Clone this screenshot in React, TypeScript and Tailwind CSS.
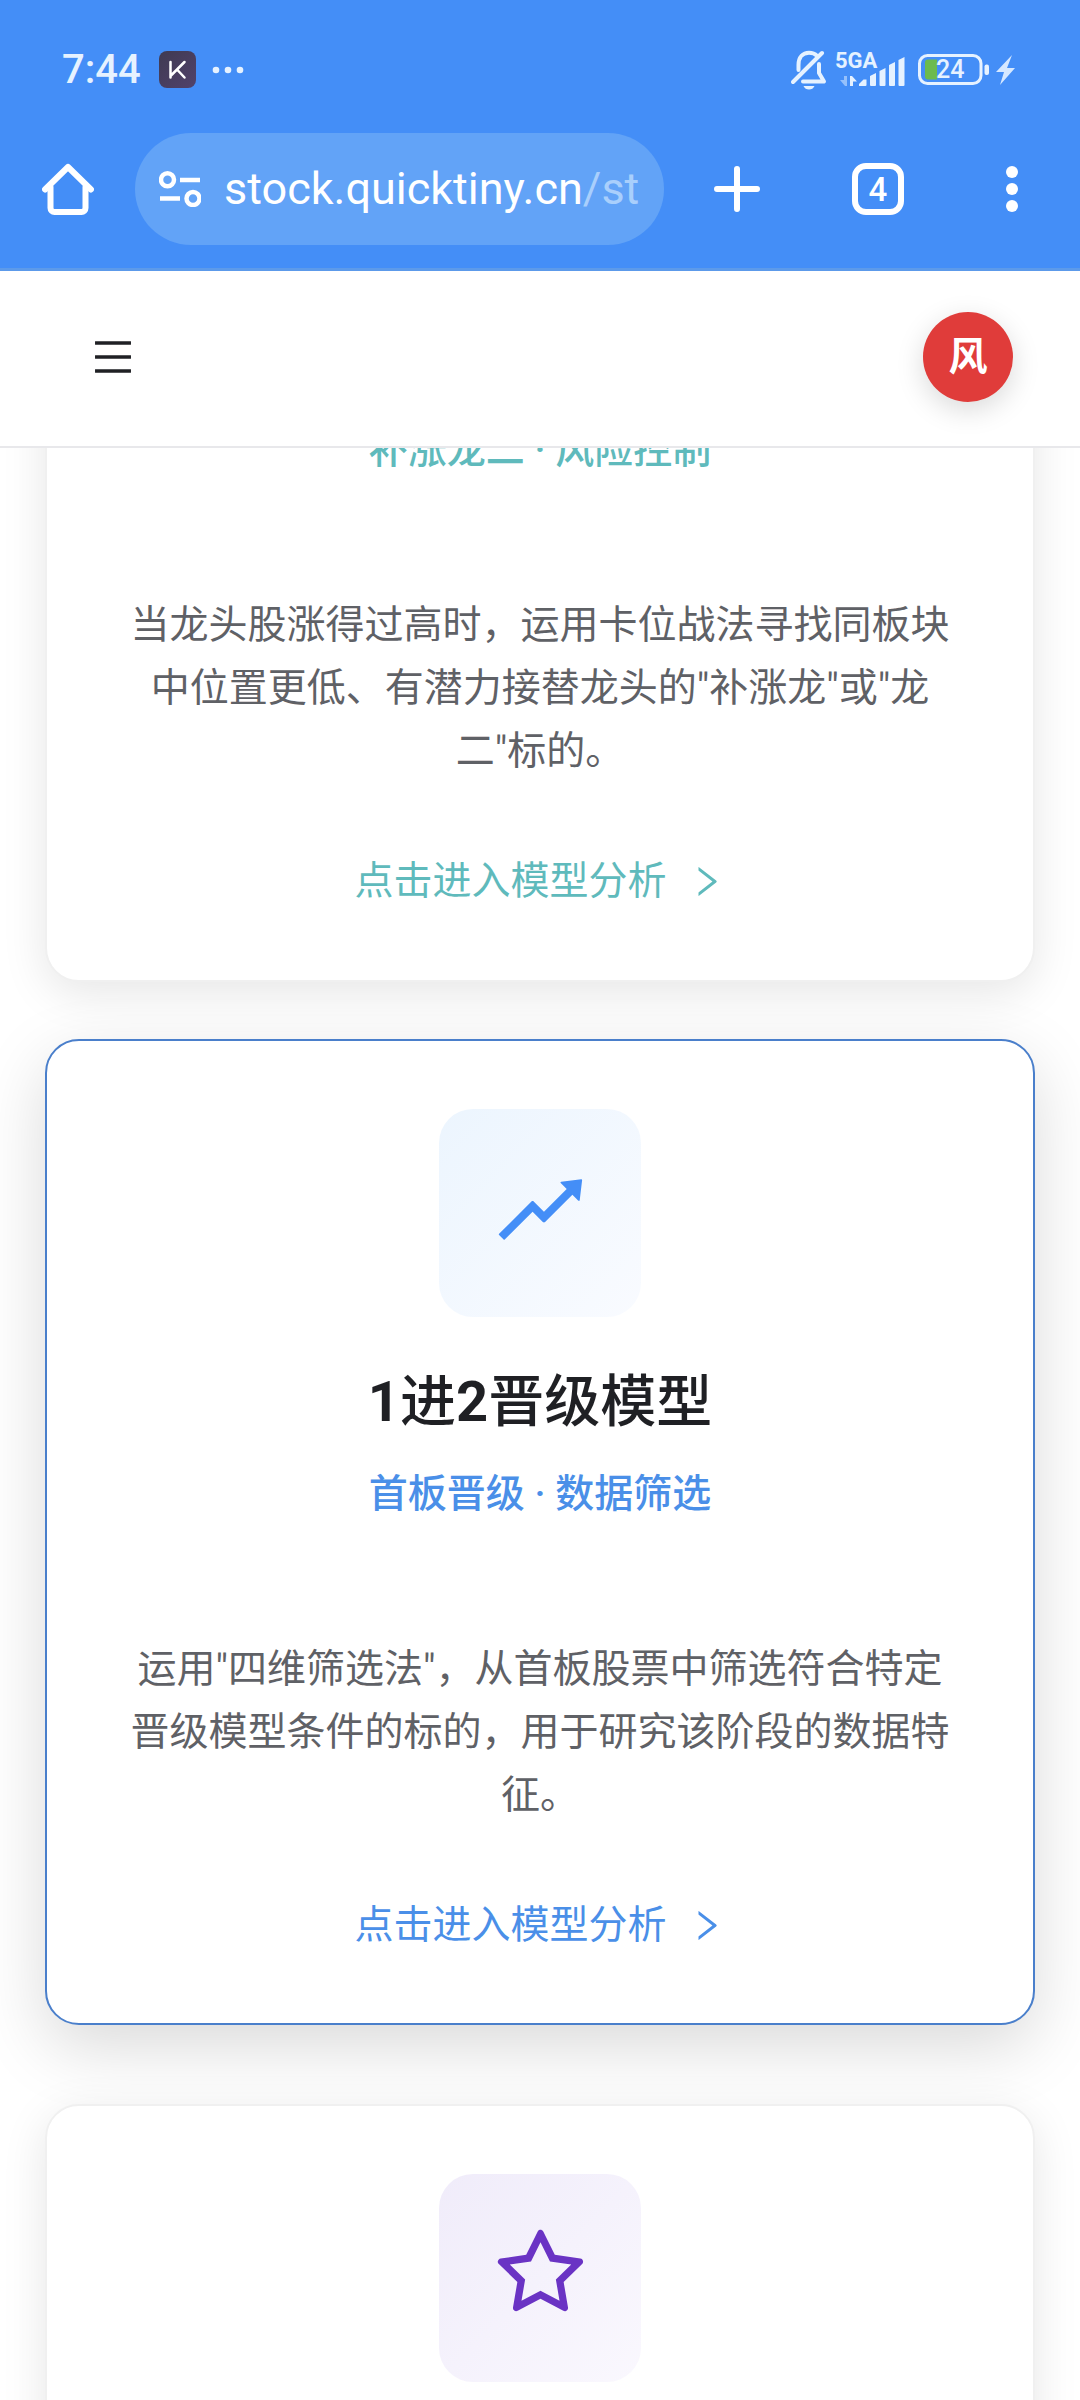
import type { ReactNode } from "react";
import { AiOutlineMenu, AiOutlineRight, AiOutlineRise, AiOutlineStar } from "react-icons/ai";

function StatusBar() {
  return (
    <div className="flex h-[133px] items-center justify-between pt-[6px] pr-16 pl-[62px] text-[#e6f2ff]">
      <div className="flex items-center">
        <span className="text-[40px] leading-none font-medium">7:44</span>
        <svg className="ml-[18px] h-[37px] w-[37px]" viewBox="0 0 37 37" aria-hidden="true">
          <defs>
            <linearGradient id="app" x1="0" y1="0" x2="1" y2="1">
              <stop offset="0" stopColor="#3f3a52" />
              <stop offset="1" stopColor="#51426b" />
            </linearGradient>
          </defs>
          <rect width="37" height="37" rx="8" fill="url(#app)" />
          <path d="M11.500 11v15.500M25.500 11l-14 14M18 18.500l7.500 8" fill="none" stroke="#fff" strokeWidth="2.500" strokeLinecap="round" />
        </svg>
        <svg className="ml-[16px] h-2 w-8" viewBox="0 0 32 8" fill="currentColor" aria-hidden="true">
          <circle cx="4" cy="4" r="3.300" />
          <circle cx="16" cy="4" r="3.300" />
          <circle cx="28" cy="4" r="3.300" />
        </svg>
      </div>
      <div className="flex items-center">
        <svg className="h-10 w-9" viewBox="0 0 36 40" fill="none" stroke="currentColor" strokeWidth="4" strokeLinecap="round" strokeLinejoin="round" aria-hidden="true">
          <path d="M2 32L31 3" />
          <path d="M7.500 20v-5C7.500 7 12 2.700 18 2.700c3.500 0 6 1 7.800 3" />
          <path d="M28 14v9l5 8.500H12" />
          <path d="M12.500 36h11c-1 2.500-3 3.500-5.500 3.500s-4.500-1-5.500-3.500z" fill="currentColor" stroke="none" />
        </svg>
        <div className="relative ml-2 h-9 w-[70px]">
          <span className="absolute top-0 left-0 text-[22px] leading-[18px] font-bold">5GA</span>
          <svg className="h-9 w-[70px]" viewBox="0 0 70 36" fill="currentColor" aria-hidden="true">
            <path d="M12 24v10h-2L5 28h4v-4z" opacity="0.5" />
            <path d="M15 24h2l5 5.500h-4V34h-3z" />
            <path d="M24 34v-2l4.500-4.500h3V33a1 1 0 0 1-1 1z" />
            <path d="M35 24l6-3v12a1 1 0 0 1-1 1h-4a1 1 0 0 1-1-1z" />
            <path d="M44.500 19l6-3v17a1 1 0 0 1-1 1h-4a1 1 0 0 1-1-1z" />
            <path d="M54 13l6-3v23a1 1 0 0 1-1 1h-4a1 1 0 0 1-1-1z" />
            <path d="M63.500 8l6-3v28a1 1 0 0 1-1 1h-4a1 1 0 0 1-1-1z" />
          </svg>
        </div>
        <div className="relative ml-[13px] h-[31px] w-[72px]">
          <svg className="h-[31px] w-[72px]" viewBox="0 0 72 31" aria-hidden="true">
            <rect x="1.500" y="1.500" width="61.500" height="28" rx="8" fill="none" stroke="currentColor" strokeWidth="3" />
            <path d="M10 5.500h9v20h-9a3 3 0 0 1-3-3v-14a3 3 0 0 1 3-3z" fill="#6cbb4e" />
            <rect x="66.500" y="10.500" width="4.500" height="10.500" rx="2" fill="currentColor" />
          </svg>
          <span className="absolute top-0 left-[18px] text-[25px] leading-[31px] font-medium">24</span>
        </div>
        <svg className="mr-px ml-[5px] h-[30px] w-5" viewBox="0 0 20 30" fill="#d6e8ff" aria-hidden="true">
          <path d="M17 0L1 17h8L5 30l15-17h-8z" />
        </svg>
      </div>
    </div>
  );
}

function Toolbar() {
  return (
    <div className="flex h-[112px] items-center pr-[62px] pl-[42px] text-white">
      <button type="button" aria-label="主页">
        <svg className="h-[52px] w-[52px]" viewBox="0 0 52 52" fill="none" stroke="currentColor" strokeWidth="6" strokeLinecap="round" strokeLinejoin="round">
          <path d="M3 26.500L26 4l23 22.500" />
          <path d="M8.500 24v21a4 4 0 0 0 4 4h27a4 4 0 0 0 4-4V24" />
        </svg>
      </button>
      <button type="button" aria-label="地址栏" className="ml-[41px] flex h-full min-w-0 flex-1 items-center rounded-full bg-[#62a3f7] pr-[23px] pl-6">
        <svg className="h-9 w-[42px] shrink-0" viewBox="0 0 42 36" fill="none" stroke="currentColor" strokeWidth="4.500" aria-hidden="true">
          <circle cx="8.500" cy="8.800" r="6.500" />
          <path d="M21 9h20M1 27.500h20" />
          <circle cx="34" cy="27.500" r="6.500" />
        </svg>
        <span className="ml-[23px] min-w-0 flex-1 overflow-hidden text-left text-[45px] leading-[60px] whitespace-nowrap">
          stock.quicktiny.cn<span className="text-[#a9cffc]">/str</span>
        </span>
      </button>
      <button type="button" aria-label="新建标签页" className="ml-[50px]">
        <svg className="h-[46px] w-[46px]" viewBox="0 0 46 46" fill="none" stroke="currentColor" strokeWidth="6" strokeLinecap="round">
          <path d="M23 3v40M3 23h40" />
        </svg>
      </button>
      <button type="button" aria-label="4 个标签页" className="ml-[92px] flex h-[52px] w-[52px] items-center justify-center rounded-[14px] border-[6px] border-white text-[33px] leading-none font-medium">
        4
      </button>
      <button type="button" aria-label="更多" className="ml-[102px]">
        <svg className="h-[46px] w-3" viewBox="0 0 12 46" fill="currentColor">
          <circle cx="6" cy="6" r="6" />
          <circle cx="6" cy="23" r="6" />
          <circle cx="6" cy="40" r="6" />
        </svg>
      </button>
    </div>
  );
}

type CardBodyProps = { title?: ReactNode; subtitle: string; description: string; accent: string };

function CardBody({ title, subtitle, description, accent }: CardBodyProps) {
  return (
    <>
      {title && <h2 className="mt-[45px] mb-[22px] text-[56px] leading-[80px] font-medium text-[#1f2024]">{title}</h2>}
      <p className={`text-[39px] leading-[60px] font-medium ${accent}`}>{subtitle}</p>
      <p className="mt-[114px] text-[39px] leading-[63px] text-[#5f6166]">{description}</p>
      <a href="#model" className={`mt-[68px] flex items-center justify-center gap-5 text-[39px] leading-[60px] ${accent}`}>
        点击进入模型分析
        <AiOutlineRight className="h-[39px] w-[39px]" aria-hidden="true" />
      </a>
    </>
  );
}

function IconTile({ tone, children }: { tone: string; children: ReactNode }) {
  return (
    <div className={`mx-auto flex h-[208px] w-[202px] items-center justify-center rounded-[34px] bg-linear-to-br pb-[7px] ${tone}`}>
      {children}
    </div>
  );
}

export default function App() {
  return (
    <div className="flex h-screen flex-col overflow-hidden bg-white font-[Roboto,'Noto_Sans_CJK_SC',sans-serif]">
      <div className="shrink-0 border-b-[3px] border-[#5c9aea] bg-[#448ef7] pb-[23px]">
        <StatusBar />
        <Toolbar />
      </div>
      <header className="flex h-[177px] shrink-0 items-center justify-between border-b-2 border-[#e8e8eb] pr-[67px] pb-[4px] pl-[90px]">
        <button type="button" aria-label="菜单" className="text-[#1f2024]">
          <AiOutlineMenu className="h-[46px] w-[46px]" />
        </button>
        <button type="button" aria-label="用户" className="h-[90px] w-[90px] rounded-full bg-[#e03c3a] text-[39px] leading-[90px] font-bold text-white shadow-[0_8px_28px_rgba(0,0,0,0.15)]">
          风
        </button>
      </header>
      <main className="min-h-0 flex-1 overflow-hidden px-[45px] text-center">
        <article className="-mt-[98px] rounded-[34px] border-2 border-[#f0f0f0] bg-white px-[76px] pt-[68px] pb-[69px] shadow-[0_11px_45px_rgba(0,0,0,0.1)]">
          <CardBody
            subtitle="补涨龙二 · 风险控制"
            description={'当龙头股涨得过高时，运用卡位战法寻找同板块中位置更低、有潜力接替龙头的"补涨龙"或"龙二"标的。'}
            accent="text-[#5fbabc]"
          />
        </article>
        <article className="mt-[57px] rounded-[34px] border-2 border-[#4a7fcb] bg-white px-[76px] pt-[68px] pb-[68px] shadow-[0_22px_68px_rgba(0,0,0,0.15)]">
          <IconTile tone="from-[#ecf5fe] to-[#f9fbff]">
            <AiOutlineRise className="h-[103px] w-[103px] text-[#448ef7]" aria-hidden="true" />
          </IconTile>
          <CardBody
            title={
              <>
                <b>1</b>进<b>2</b>晋级模型
              </>
            }
            subtitle="首板晋级 · 数据筛选"
            description={'运用"四维筛选法"，从首板股票中筛选符合特定晋级模型条件的标的，用于研究该阶段的数据特征。'}
            accent="text-[#4a8fe8]"
          />
        </article>
        <article className="mt-[79px] rounded-[34px] border-2 border-[#f0f0f0] bg-white px-[76px] pt-[68px] pb-[69px] shadow-[0_11px_45px_rgba(0,0,0,0.1)]">
          <IconTile tone="from-[#f0ecfa] to-[#faf8fe]">
            <AiOutlineStar className="h-[103px] w-[103px] text-[#6a33c4]" aria-hidden="true" />
          </IconTile>
        </article>
      </main>
    </div>
  );
}
